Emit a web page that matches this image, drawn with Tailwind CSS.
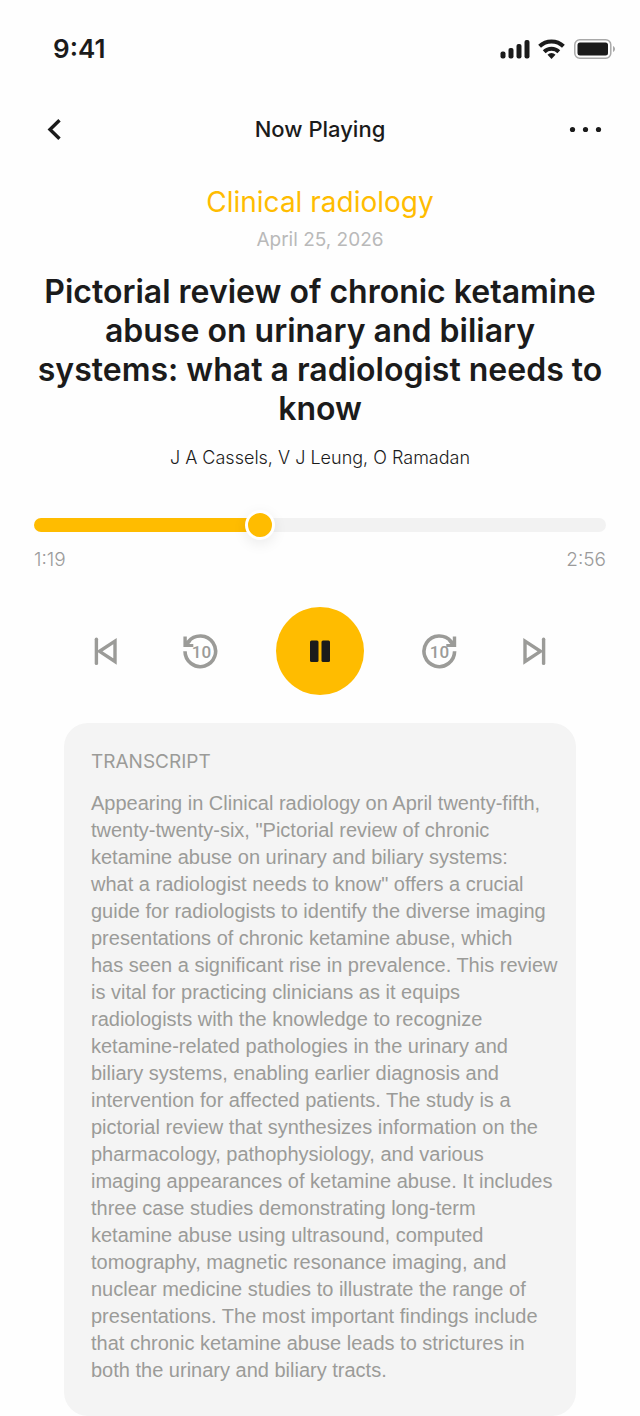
<!DOCTYPE html>
<html lang="en">
<head>
    <meta charset="UTF-8">
    <meta name="viewport" content="width=device-width, initial-scale=1.0">
    <title>Now Playing</title>
    <script src="https://cdn.jsdelivr.net/npm/@tailwindcss/browser@4"></script>
</head>
<body class="bg-[#fefefe] text-[#1b1b1b] font-['Inter','Liberation_Sans',sans-serif]">
    <div class="min-h-screen flex flex-col">
        <!-- Status bar -->
        <div class="flex items-center justify-between pl-[53px] pr-6 pt-8">
            <span class="text-[26px] leading-[34px] font-semibold">9:41</span>
            <div class="flex items-center gap-2">
                <svg class="w-[30px] h-5" viewBox="0 0 30 20" fill="currentColor" aria-hidden="true">
                    <rect x="0.5" y="12.5" width="5" height="7" rx="2"/>
                    <rect x="8.5" y="9" width="5" height="10.5" rx="2"/>
                    <rect x="16.5" y="5" width="5" height="14.5" rx="2"/>
                    <rect x="24.5" y="1" width="5" height="18.5" rx="2"/>
                </svg>
                <svg class="w-[27px] h-5" viewBox="0 0 27 20" fill="none" stroke="currentColor" stroke-width="4" aria-hidden="true">
                    <path d="M1.6 7.3a17 17 0 0 1 23.8 0"/>
                    <path d="M6.200 12.800a10.500 10.500 0 0 1 14.600 0"/>
                    <path d="M13.500 20l-4-4.300a5.500 5.500 0 0 1 8 0z" fill="currentColor" stroke="none"/>
                </svg>
                <svg class="w-[43px] h-[22px]" viewBox="0 0 43 22" aria-hidden="true">
                    <rect x="1.800" y="1.700" width="36" height="18.600" rx="5" fill="none" stroke="#a9a9a9" stroke-width="1.500"/>
                    <rect x="4.500" y="4.500" width="30.500" height="13" rx="2.500" fill="#1b1b1b"/>
                    <path d="M40 8v6c1.200-.5 2-1.600 2-3s-.8-2.500-2-3z" fill="#a9a9a9"/>
                </svg>
            </div>
        </div>

        <!-- Header -->
        <header class="flex items-center justify-between px-9 pt-[45px]">
            <button class="w-9 h-9 flex items-center justify-center" aria-label="Back">
                <svg class="w-6 h-6" viewBox="0 0 24 24" fill="none" stroke="currentColor" stroke-width="3.400" aria-hidden="true">
                    <path d="M17.500 3.200L8 12.500l9.500 9.300"/>
                </svg>
            </button>
            <h1 class="text-[22px] leading-8 font-medium">Now Playing</h1>
            <button class="w-9 h-9 flex items-center justify-center" aria-label="More options">
                <svg class="w-9 h-6" viewBox="0 0 36 24" fill="currentColor" aria-hidden="true">
                    <circle cx="4.500" cy="12.500" r="2.600"/>
                    <circle cx="17.500" cy="12.500" r="2.600"/>
                    <circle cx="30.500" cy="12.500" r="2.600"/>
                </svg>
            </button>
        </header>

        <main class="flex flex-col">
            <!-- Episode info -->
            <section class="px-8 pt-9 text-center">
                <p class="text-[28px] leading-[38px] text-[#ffbc00]">Clinical radiology</p>
                <p class="pt-[5px] text-[19px] leading-7 text-[#b9b9b9]">April 25, 2026</p>
                <h2 class="pt-[18px] text-[32px] leading-[39px] font-semibold">Pictorial review of chronic ketamine<br>abuse on urinary and biliary<br>systems: what a radiologist needs to<br>know</h2>
                <p class="pt-4 text-[18px] leading-7 font-light">J A Cassels, V J Leung, O Ramadan</p>
            </section>

            <!-- Progress -->
            <section class="px-[34px] pt-[38px]">
                <input type="range" min="0" max="176" step="any" value="68.4" aria-label="Playback position"
                    class="block w-full h-[30px] appearance-none bg-transparent [&::-webkit-slider-runnable-track]:h-[14px] [&::-webkit-slider-runnable-track]:rounded-full [&::-webkit-slider-runnable-track]:bg-[linear-gradient(to_right,#ffbc00_40%,#f2f2f2_40%)] [&::-webkit-slider-thumb]:appearance-none [&::-webkit-slider-thumb]:-mt-2 [&::-webkit-slider-thumb]:w-[30px] [&::-webkit-slider-thumb]:h-[30px] [&::-webkit-slider-thumb]:rounded-full [&::-webkit-slider-thumb]:bg-[#ffbc00] [&::-webkit-slider-thumb]:border-3 [&::-webkit-slider-thumb]:border-solid [&::-webkit-slider-thumb]:border-white [&::-webkit-slider-thumb]:shadow-[0_4px_14px_rgba(0,0,0,0.08)]">
                <div class="flex justify-between pt-1 text-[19px] leading-8 font-light text-[#9b9b9b]">
                    <span>1:19</span>
                    <span>2:56</span>
                </div>
            </section>

            <!-- Controls -->
            <section class="flex items-center justify-center gap-[58px] pt-[31px] text-[#9b9b98]">
                <button aria-label="Previous">
                    <svg class="w-9 h-9" viewBox="0 0 36 36" fill="none" stroke="currentColor" stroke-width="3.400" aria-hidden="true">
                        <path d="M8.400 6.200v24.200" stroke-linecap="round"/>
                        <path d="M27 8.100v20.400L11.500 18.300z"/>
                    </svg>
                </button>
                <button aria-label="Back 10 seconds">
                    <svg class="w-9 h-9" viewBox="0 0 36 36" fill="none" stroke="currentColor" stroke-width="3.600" aria-hidden="true">
                        <path d="M3 18.200A15.300 15.300 0 1 0 6.400 8.700"/>
                        <path d="M1.400 3.500h3.400v4.300l3-1 1.500 1.700-2 2.500h4v3H1.400z" fill="currentColor" stroke="none"/>
                        <text x="19.5" y="24.5" text-anchor="middle" font-family="Roboto, sans-serif" font-size="17" font-weight="500" fill="currentColor" stroke="none">10</text>
                    </svg>
                </button>
                <button class="w-[88px] h-[88px] rounded-full bg-[#ffbc00] text-[#1b1b1b] flex items-center justify-center" aria-label="Pause">
                    <svg class="w-6 h-6" viewBox="0 0 24 24" fill="currentColor" aria-hidden="true">
                        <rect x="2" y="1.500" width="8.500" height="21.500" rx="1.500"/>
                        <rect x="13.500" y="1.500" width="8.500" height="21.500" rx="1.500"/>
                    </svg>
                </button>
                <button aria-label="Forward 10 seconds">
                    <svg class="w-9 h-9" viewBox="0 0 36 36" fill="none" stroke="currentColor" stroke-width="3.600" aria-hidden="true">
                        <path d="M32.600 18.200A15.300 15.300 0 1 1 29.200 8.700"/>
                        <path d="M34.200 3.500h-3.400v4.300l-3-1-1.500 1.700 2 2.500h-4v3h9.900z" fill="currentColor" stroke="none"/>
                        <text x="17.5" y="24.5" text-anchor="middle" font-family="Roboto, sans-serif" font-size="17" font-weight="500" fill="currentColor" stroke="none">10</text>
                    </svg>
                </button>
                <button aria-label="Next">
                    <svg class="w-9 h-9" viewBox="0 0 36 36" fill="none" stroke="currentColor" stroke-width="3.400" aria-hidden="true">
                        <path d="M27.600 6.200v24.200" stroke-linecap="round"/>
                        <path d="M9 8.100v20.400l15.500-10.200z"/>
                    </svg>
                </button>
            </section>

            <!-- Transcript -->
            <section class="mx-16 mt-7 px-[27px] pt-6 pb-8 rounded-3xl bg-[#f4f4f4] text-[#9b9b98]">
                <h3 class="text-[19px] leading-[30px]">TRANSCRIPT</h3>
                <p class="pt-[13px] font-['Liberation_Sans',sans-serif] text-[20px] leading-[27px] whitespace-nowrap">
                    Appearing in Clinical radiology on April twenty-fifth,<br>
                    twenty-twenty-six, "Pictorial review of chronic<br>
                    ketamine abuse on urinary and biliary systems:<br>
                    what a radiologist needs to know" offers a crucial<br>
                    guide for radiologists to identify the diverse imaging<br>
                    presentations of chronic ketamine abuse, which<br>
                    has seen a significant rise in prevalence. This review<br>
                    is vital for practicing clinicians as it equips<br>
                    radiologists with the knowledge to recognize<br>
                    ketamine-related pathologies in the urinary and<br>
                    biliary systems, enabling earlier diagnosis and<br>
                    intervention for affected patients. The study is a<br>
                    pictorial review that synthesizes information on the<br>
                    pharmacology, pathophysiology, and various<br>
                    imaging appearances of ketamine abuse. It includes<br>
                    three case studies demonstrating long-term<br>
                    ketamine abuse using ultrasound, computed<br>
                    tomography, magnetic resonance imaging, and<br>
                    nuclear medicine studies to illustrate the range of<br>
                    presentations. The most important findings include<br>
                    that chronic ketamine abuse leads to strictures in<br>
                    both the urinary and biliary tracts.
                </p>
            </section>
        </main>
    </div>
</body>
</html>
